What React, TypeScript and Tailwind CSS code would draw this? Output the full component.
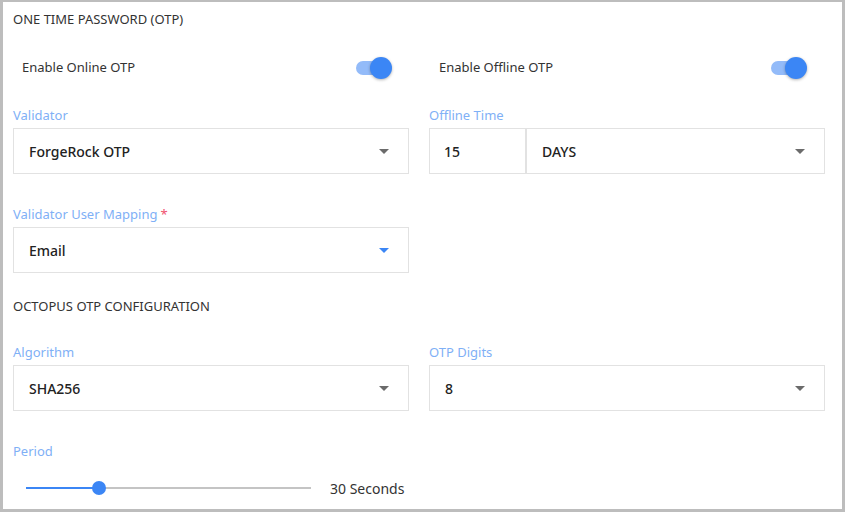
import React from 'react';

const font = { fontFamily: '"Noto Sans", "Open Sans", sans-serif' };

const Toggle = () => (
  <div className="relative w-[36px] h-[22px] flex items-center">
    <div className="w-[34px] h-[14px] rounded-full bg-[#93bbf9]" />
    <div className="absolute right-0 top-0 w-[22px] h-[22px] rounded-full bg-[#3b86f5] shadow-[0_1px_3px_rgba(0,0,0,0.3)]" />
  </div>
);

const Caret = ({ blue }: { blue?: boolean }) => (
  <svg width="10" height="5" viewBox="0 0 10 5">
    <path d="M0 0 L10 0 L5 5 Z" fill={blue ? '#3b86f5' : '#6b6b6b'} />
  </svg>
);

const Label = ({ children, required }: { children: React.ReactNode; required?: boolean }) => (
  <div className="text-[13px] text-[#7fb0f6] h-[25px] leading-[25px]">
    {children}
    {required && <span className="text-[#f0506e] ml-[3px]">*</span>}
  </div>
);

const Select = ({ value, blue }: { value: string; blue?: boolean }) => (
  <div className="h-[46px] border border-[#e2e2e2] flex items-center justify-between pl-[15px] pr-[19px]">
    <span className="text-[14px] font-medium text-[#222]">{value}</span>
    <Caret blue={blue} />
  </div>
);

export default function App() {
  return (
    <div style={font} className="w-[845px] h-[512px] bg-[#bdbdbd] pt-[2px] pl-[3px] pr-[3px] pb-[3px]">
      <div className="w-full h-full bg-white pl-[10px] pr-[17px] text-[#333]">
        <div className="h-[36px] flex items-center text-[13px] text-[#333]">ONE TIME PASSWORD (OTP)</div>

        <div className="grid grid-cols-2 gap-x-[20px]">
          <div className="h-[65px] pb-[6px] flex items-center justify-between pl-[9px] pr-[17px]">
            <span className="text-[13px] text-[#333]">Enable Online OTP</span>
            <Toggle />
          </div>
          <div className="h-[65px] pb-[6px] flex items-center justify-between pl-[10px] pr-[18px]">
            <span className="text-[13px] text-[#333]">Enable Offline OTP</span>
            <Toggle />
          </div>

          <div>
            <Label>Validator</Label>
            <Select value="ForgeRock OTP" />
          </div>
          <div>
            <Label>Offline Time</Label>
            <div className="flex h-[46px] border border-[#e2e2e2]">
              <div className="w-[97px] border-r-2 border-[#e2e2e2] flex items-center pl-[14px] text-[14px] font-medium text-[#222]">15</div>
              <div className="flex-1 flex items-center justify-between pl-[15px] pr-[19px]">
                <span className="text-[14px] font-medium text-[#222]">DAYS</span>
                <Caret />
              </div>
            </div>
          </div>

          <div className="pt-[28px]">
            <Label required>Validator User Mapping</Label>
            <Select value="Email" blue />
          </div>
          <div />
        </div>

        <div className="h-[67px] flex items-center text-[13px] text-[#333]">OCTOPUS OTP CONFIGURATION</div>

        <div className="grid grid-cols-2 gap-x-[20px]">
          <div>
            <Label>Algorithm</Label>
            <Select value="SHA256" />
          </div>
          <div>
            <Label>OTP Digits</Label>
            <Select value="8" />
          </div>
        </div>

        <div className="pt-[28px]">
          <Label>Period</Label>
          <div className="flex items-center h-[30px] pl-[13px] pt-[18px]">
            <div className="relative w-[285px] h-[2px] bg-[#c4c4c4]">
              <div className="absolute left-0 top-0 h-[2px] w-[72px] bg-[#3b86f5]" />
              <div className="absolute left-[66px] top-[-6px] w-[14px] h-[14px] rounded-full bg-[#3b86f5]" />
            </div>
            <span className="ml-[19px] text-[14px] text-[#333]">30 Seconds</span>
          </div>
        </div>
      </div>
    </div>
  );
}
